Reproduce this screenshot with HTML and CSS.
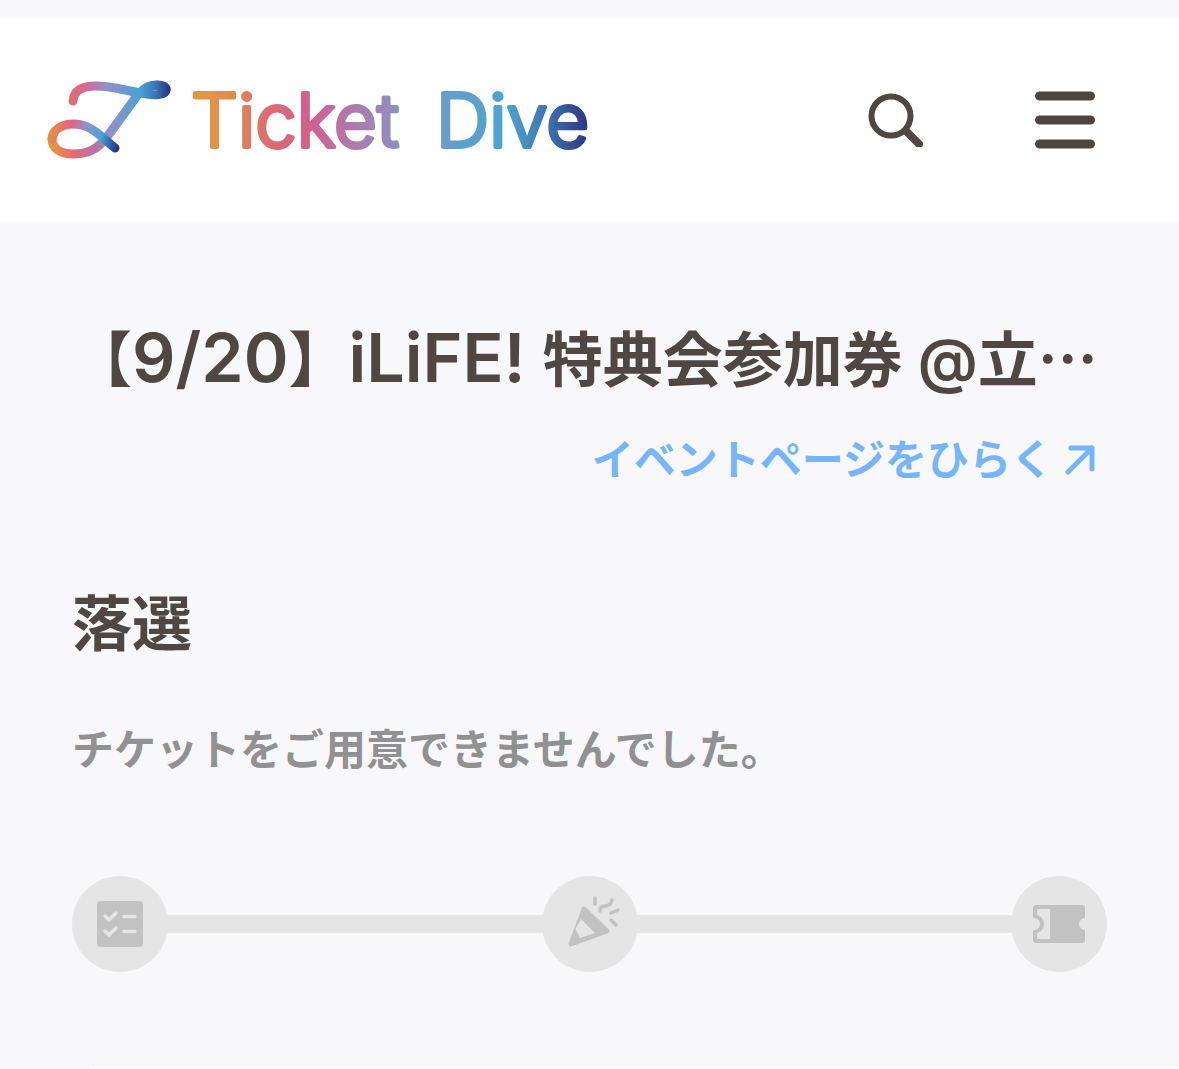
FILE: index.html
```html
<!DOCTYPE html>
<html lang="ja">
  <head>
    <meta charset="UTF-8" />
    <meta name="viewport" content="width=device-width, initial-scale=1.0" />
    <title>Ticket Dive</title>
    <link rel="stylesheet" href="styles.css" />
  </head>
  <body>
    <header class="header">
      <a href="/" class="logo" aria-label="Ticket Dive">
        <svg width="560" height="108" viewBox="0 -12 560 108">
          <defs>
            <linearGradient id="markTop" gradientUnits="userSpaceOnUse" x1="23" y1="0" x2="124" y2="0">
              <stop offset="0" stop-color="#e0706c" />
              <stop offset="0.14" stop-color="#dc668c" />
              <stop offset="0.38" stop-color="#8e92c8" />
              <stop offset="0.7" stop-color="#4ba0d4" />
              <stop offset="0.85" stop-color="#3b78b8" />
              <stop offset="1" stop-color="#2b3187" />
            </linearGradient>
            <linearGradient id="markStem" gradientUnits="userSpaceOnUse" x1="2" y1="0" x2="124" y2="0">
              <stop offset="0" stop-color="#e89c34" />
              <stop offset="0.2" stop-color="#e26c72" />
              <stop offset="0.38" stop-color="#bd70a4" />
              <stop offset="0.52" stop-color="#8f92c6" />
              <stop offset="0.76" stop-color="#4ba2d6" />
              <stop offset="0.86" stop-color="#3b78b8" />
              <stop offset="1" stop-color="#2b3187" />
            </linearGradient>
            <linearGradient id="markTail" gradientUnits="userSpaceOnUse" x1="2" y1="46" x2="72" y2="68">
              <stop offset="0" stop-color="#e89c34" />
              <stop offset="0.3" stop-color="#de6482" />
              <stop offset="0.52" stop-color="#8c94cc" />
              <stop offset="0.74" stop-color="#45a4d8" />
              <stop offset="1" stop-color="#2b3187" />
            </linearGradient>
            <linearGradient id="word" gradientUnits="userSpaceOnUse" x1="146" y1="0" x2="548" y2="0">
              <stop offset="0" stop-color="#e6983c" />
              <stop offset="0.08" stop-color="#e0904c" />
              <stop offset="0.2" stop-color="#dc6a74" />
              <stop offset="0.3" stop-color="#d0608f" />
              <stop offset="0.42" stop-color="#a87fb0" />
              <stop offset="0.54" stop-color="#8494c6" />
              <stop offset="0.66" stop-color="#619fcc" />
              <stop offset="0.78" stop-color="#4ea4d2" />
              <stop offset="0.86" stop-color="#4181b8" />
              <stop offset="1" stop-color="#2c2d7c" />
            </linearGradient>
          </defs>
          <g fill="none" stroke-width="9" stroke-linecap="round" stroke-linejoin="round">
            <path stroke="url(#markStem)" d="M120 12C120 7 112 6 104 8C97 10 92 16 88 22L61 59C52 71 42 76 27 76C14 76 6 70 6 61C6 59 7 57 8 55" />
            <path stroke="url(#markTail)" d="M6 61C6 52 16 46 27 46C45 46 54 58 69 70" />
            <path stroke="url(#markTop)" d="M27 23C28 11 38 8 50 8C68 8 80 13 95 15C108 18 120 17 120 12C120 7 110 6 102 9" />
          </g>
          <g class="logo-word" fill="url(#word)" stroke="url(#word)">
            <text x="145" y="69">Ticket</text>
            <text x="390" y="69">Dive</text>
          </g>
        </svg>
      </a>
      <div class="header-actions">
        <button type="button" class="icon-button" aria-label="検索">
          <svg width="56" height="54" viewBox="0 0 56 54" fill="none" stroke="currentColor">
            <circle cx="24" cy="23" r="19.5" stroke-width="6" />
            <path d="M39 38L52 51" stroke-width="8" stroke-linecap="round" />
          </svg>
        </button>
        <button type="button" class="icon-button" aria-label="メニュー">
          <svg width="60" height="58" viewBox="0 0 60 58" stroke="currentColor" stroke-width="9" stroke-linecap="round">
            <path d="M4.500 5H55.500M4.500 29H55.500M4.500 53H55.500" />
          </svg>
        </button>
      </div>
    </header>

    <main class="content">
      <h1 class="event-title">【<span class="latin">9/20</span>】<span class="latin">iLiFE! </span>特典会参加券 @立<span class="dots">…</span></h1>
      <a href="#" class="event-link">
        イベントページをひらく
        <svg width="30" height="30" viewBox="0 0 30 30" fill="none" stroke="currentColor" stroke-width="5" stroke-linecap="round" stroke-linejoin="round">
          <path d="M6 3H27V24M27 3L3 27" />
        </svg>
      </a>

      <h2 class="status">落選</h2>
      <p class="message">チケットをご用意できませんでした。</p>

      <ol class="steps">
        <li class="step" aria-label="申込">
          <svg width="46" height="46" viewBox="0 0 46 46">
            <rect width="46" height="46" rx="4" fill="#c2c2c2" />
            <path d="M8 15L12 19L19 12M8 30L12 34L19 27M27 15.500H38M27 30.500H38" fill="none" stroke="#e5e5e5" stroke-width="3.500" stroke-linecap="round" stroke-linejoin="round" />
          </svg>
        </li>
        <li class="step" aria-label="抽選">
          <svg width="54" height="54" viewBox="0 0 54 54">
            <path d="M21 12L44 34L8 47Z" fill="#c2c2c2" stroke="#c2c2c2" stroke-width="5" stroke-linejoin="round" />
            <path d="M18 22L32 36L17 41L12.500 32Z" fill="#e5e5e5" />
            <path d="M32 1V7M37 14C37 10 39 9 42 9C46 9 48 7 49 3M48 16L55 13M48 23L53 28" fill="none" stroke="#c2c2c2" stroke-width="3.500" stroke-linecap="round" />
          </svg>
        </li>
        <li class="step" aria-label="チケット">
          <svg width="54" height="38" viewBox="0 0 54 38">
            <path d="M4 0H50Q53 0 53 3V13A6 6 0 0 0 53 25V35Q53 38 50 38H4Q1 38 1 35V25C5 25 8 23 8 19S5 13 1 13V3Q1 0 4 0Z" fill="#c2c2c2" />
            <path d="M5 4H18V34H5V28C9 27 12 24 12 19S9 11 5 10Z" fill="#e5e5e5" />
          </svg>
        </li>
      </ol>
    </main>
    <section class="card"></section>
  </body>
</html>
```
FILE: styles.css
```css
* {
  margin: 0;
  padding: 0;
  box-sizing: border-box;
}

body {
  padding-top: 18px;
  background: #f8f8fb;
  color: #4e4744;
  font-family: "Inter", "Noto Sans CJK JP", sans-serif;
}

.header {
  display: flex;
  align-items: center;
  justify-content: space-between;
  height: 204px;
  padding: 0 84px 0 46px;
  background: white;
}

.logo svg,
.icon-button svg {
  display: block;
}

.logo-word {
  font-family: "Inter", sans-serif;
  font-size: 74px;
  font-weight: 300;
  stroke-width: 4px;
  stroke-linejoin: round;
}

.header-actions {
  display: flex;
  align-items: center;
  gap: 112px;
}

.icon-button {
  border: none;
  background: none;
  color: #4e4744;
  cursor: pointer;
}

.content {
  display: flex;
  flex-direction: column;
  padding: 88px 72px 0;
}

.event-title {
  font-size: 60px;
  font-weight: 600;
  line-height: 92px;
  white-space: nowrap;
}

.latin {
  font-size: 68px;
  line-height: 1;
}

.dots {
  font-family: "Noto Sans CJK JP", sans-serif;
}

.event-link {
  display: flex;
  align-items: center;
  align-self: flex-end;
  gap: 12px;
  margin-top: 22px;
  padding-right: 12px;
  color: #76b5f9;
  font-size: 42px;
  font-weight: 600;
  line-height: 64px;
  text-decoration: none;
}

.status {
  margin-top: 86px;
  font-size: 60px;
  font-weight: 600;
  line-height: 92px;
}

.message {
  margin-top: 48px;
  color: #919191;
  font-size: 42px;
  font-weight: 600;
  line-height: 64px;
}

.steps {
  display: flex;
  justify-content: space-between;
  margin-top: 94px;
  list-style: none;
  background: linear-gradient(#e5e5e5, #e5e5e5) center / calc(100% - 96px) 18px no-repeat;
}

.step {
  display: flex;
  align-items: center;
  justify-content: center;
  width: 96px;
  height: 96px;
  border-radius: 50%;
  background: #e5e5e5;
}

.step svg {
  overflow: visible;
}

.card {
  height: 2px;
  margin: 95px 0 0 90px;
  background: white;
}
```
